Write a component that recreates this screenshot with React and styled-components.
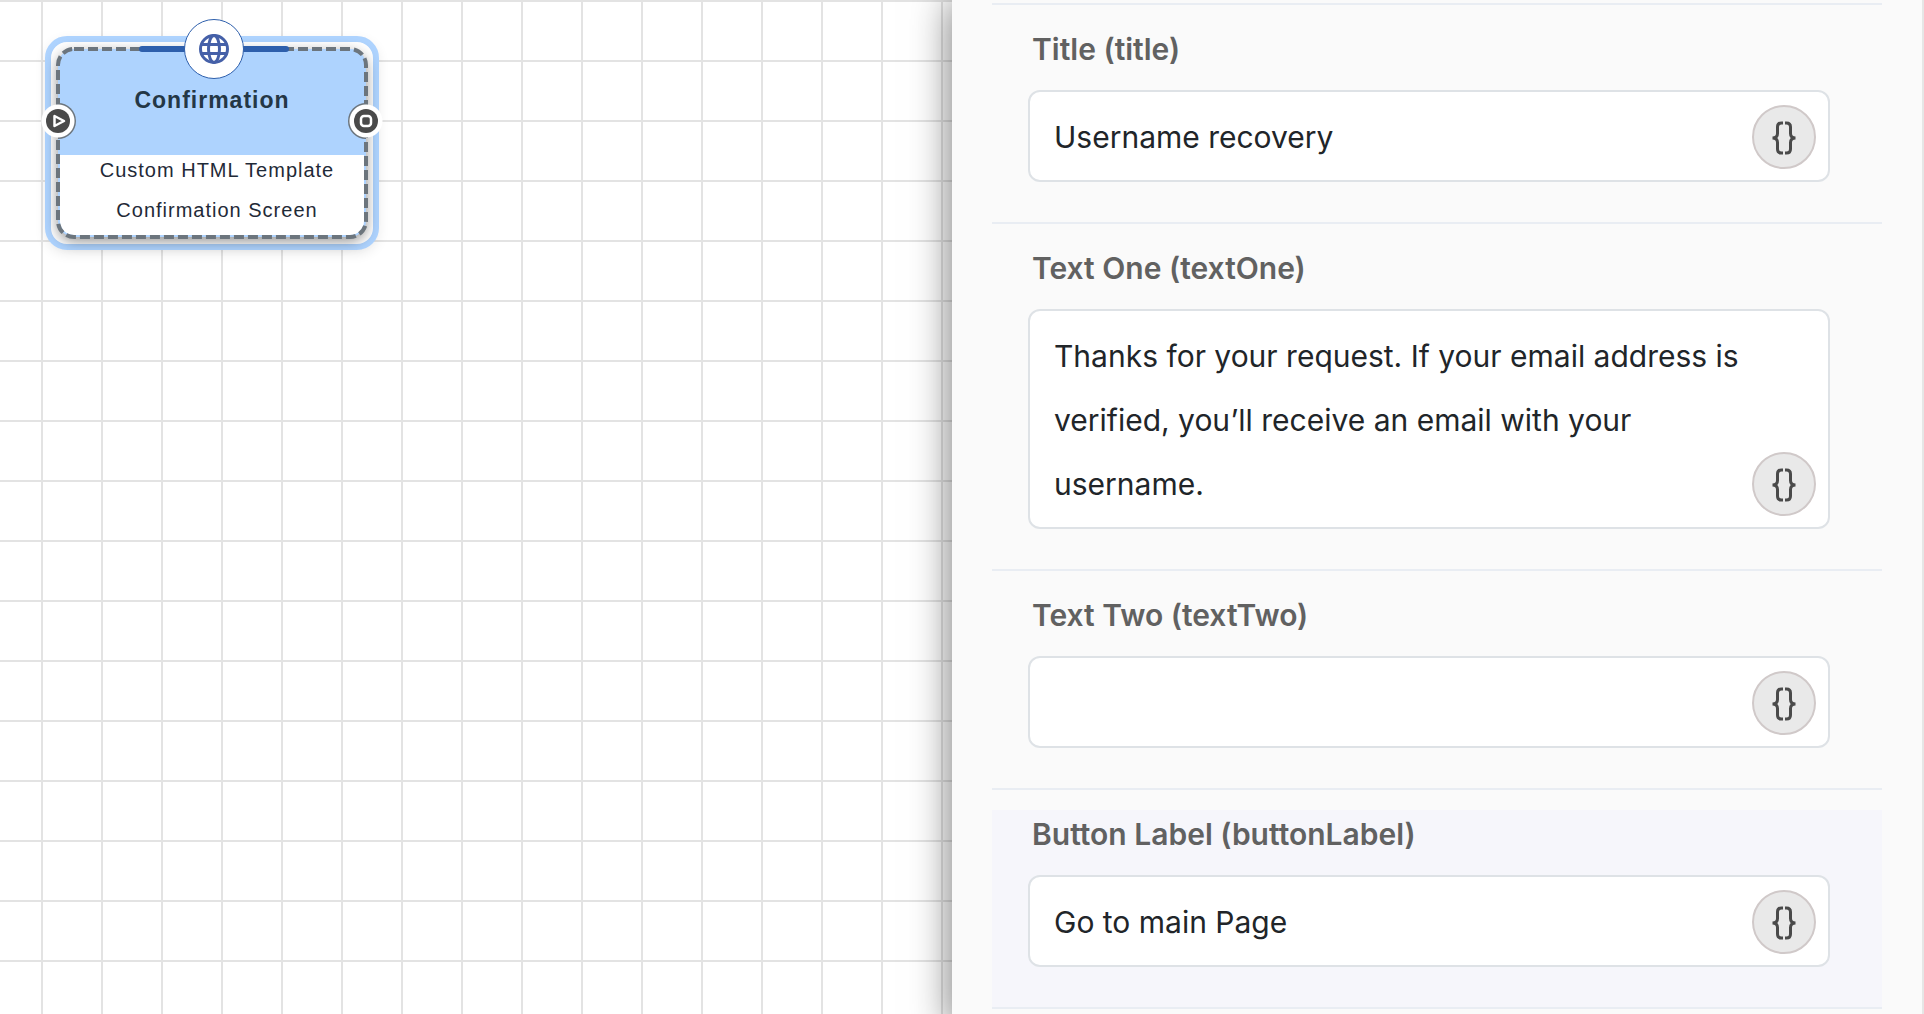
import React, { useId } from 'react';
import styled, { createGlobalStyle } from 'styled-components';

const GlobalStyle = createGlobalStyle`
  *, *::before, *::after { box-sizing: border-box; }
  body { margin: 0; background: #fff; }
`;

const uiFont = 'Inter, "Liberation Sans", sans-serif';
const nodeFont = '"Liberation Sans", Arial, sans-serif';

const Page = styled.div`
  display: grid;
  grid-template-columns: minmax(0, 952fr) minmax(0, 972fr);
  height: 100vh;
  overflow: hidden;
`;

const Canvas = styled.main`
  position: relative;
  overflow: hidden;
  background-color: #fff;
  background-image:
    linear-gradient(to right, #e3e3e3 2px, transparent 2px),
    linear-gradient(to bottom, #e3e3e3 2px, transparent 2px);
  background-size: 60px 60px;
  background-position: 41px 0, 0 0;
`;

const NodeFrame = styled.article`
  position: absolute;
  top: 36px;
  left: 45px;
  width: 334px;
  padding: 7px;
  border: 6px solid #aed3fe;
  border-radius: 22px;
  background: #fff;
  font-family: ${nodeFont};
  letter-spacing: 1px;
  text-align: center;
  box-shadow: 0 4px 12px rgba(0, 0, 0, 0.08);
`;

const NodeCard = styled.div`
  padding: 2px;
  border-radius: 16px;
  background: #aed3fe;
  box-shadow: 0 4px 14px rgba(0, 0, 0, 0.45);
`;

const NodeHeader = styled.header`
  height: 104px;
  padding-top: 32px;
`;

const NodeTitle = styled.h2`
  margin: 0;
  font-size: 23px;
  line-height: 34px;
  color: #243746;
`;

const NodeBody = styled.div`
  height: 80px;
  padding-left: 10px;
  border-radius: 0 0 14px 14px;
  background: #fff;
`;

const NodeLine = styled.p`
  margin: 0;
  font-size: 20px;
  line-height: 30px;
  padding-bottom: 10px;
  color: #1f2a37;
`;

const Outline = styled.svg`
  position: absolute;
  inset: 5px;
  width: 312px;
  height: 192px;
`;

const TopBar = styled.span`
  position: absolute;
  top: 4px;
  left: 88px;
  width: 150px;
  height: 6px;
  border-radius: 3px;
  background: #2e5fac;
`;

const TypeBadge = styled.span`
  position: absolute;
  top: -23px;
  left: 133px;
  display: grid;
  place-items: center;
  width: 60px;
  height: 60px;
  border: 1px solid #2e5fac;
  border-radius: 50%;
  background: #fff;
`;

const Port = styled.button`
  position: absolute;
  top: 61px;
  ${(p) => p.$side}: -11px;
  display: grid;
  place-items: center;
  width: 36px;
  height: 36px;
  padding: 0;
  border: 0;
  border-radius: 50%;
  background:
    radial-gradient(circle, #fff 16px, transparent 17px),
    linear-gradient(to ${(p) => p.$side}, #6c757d 50%, transparent 50%);
`;

const Panel = styled.aside`
  position: relative;
  min-width: 0;
  padding: 3px 40px 0;
  border-right: 2px solid #e6e6e6;
  background: #fafafa;
  box-shadow: 0 0 38px rgba(0, 0, 0, 0.55);
  font-family: ${uiFont};
`;

const Divider = styled.hr`
  height: 2px;
  margin: 0 0 20px;
  border: 0;
  background: #e9edf3;
`;

const FieldRow = styled.section`
  display: flex;
  flex-direction: column;
  padding: 0 52px 40px 36px;
  background: ${(p) => (p.$active ? '#f6f6fb' : 'transparent')};
`;

const FieldLabel = styled.label`
  padding: 4px 4px 21px;
  font-size: 30px;
  line-height: 40px;
  font-weight: 600;
  color: #616161;
`;

const FieldBox = styled.div`
  display: flex;
  align-items: flex-end;
  padding: 13px 12px 11px 24px;
  border: 2px solid #dee2e6;
  border-radius: 12px;
  background: #fff;
`;

const controlStyles = `
  flex: 1;
  min-width: 0;
  padding: 0;
  border: 0;
  outline: 0;
  background: transparent;
  font-family: ${uiFont};
  font-size: 30px;
  line-height: 64px;
  color: #212529;
`;

const TextInput = styled.input`
  ${controlStyles}
  height: 64px;
`;

const TextArea = styled.textarea`
  ${controlStyles}
  display: block;
  resize: none;
  overflow: hidden;
`;

const VariableButton = styled.button`
  display: grid;
  place-items: center;
  flex: none;
  width: 64px;
  height: 64px;
  padding: 2px 0 0;
  border: 2px solid #d0c9c9;
  border-radius: 50%;
  background: #e9e9e9;
  color: #4a4a4a;
`;

const BracesIcon = () => (
  <svg width="24" height="34" viewBox="0 0 24 34" fill="none" stroke="currentColor" strokeWidth="3" aria-hidden="true">
    <path d="M11 2H9.5C6.5 2 5.5 3.5 5.5 6V12.500C5.500 15.500 4 17 0.500 17C4 17 5.500 18.500 5.500 21.500V28C5.500 30.500 6.500 32 9.500 32H11" />
    <path d="M13 2H14.500C17.500 2 18.500 3.500 18.500 6V12.500C18.500 15.500 20 17 23.500 17C20 17 18.500 18.500 18.500 21.500V28C18.500 30.500 17.500 32 14.500 32H13" />
  </svg>
);

const GlobeIcon = () => (
  <svg width="30" height="30" viewBox="0 0 30 30" fill="none" stroke="#4560a8" strokeWidth="3" aria-hidden="true">
    <circle cx="15" cy="15" r="13.500" />
    <ellipse cx="15" cy="15" rx="5.500" ry="13.500" />
    <path d="M3 10.500H27M3 19.500H27" />
  </svg>
);

const PlayIcon = () => (
  <svg width="24" height="24" viewBox="0 0 24 24" aria-hidden="true">
    <circle cx="12" cy="12" r="12" fill="#4a4a4a" />
    <path d="M8.500 7V17L18 12Z" fill="none" stroke="#fff" strokeWidth="2.500" strokeLinejoin="round" />
  </svg>
);

const StopIcon = () => (
  <svg width="24" height="24" viewBox="0 0 24 24" aria-hidden="true">
    <circle cx="12" cy="12" r="12" fill="#4a4a4a" />
    <rect x="7" y="7" width="10" height="10" rx="3" fill="none" stroke="#fff" strokeWidth="2.500" />
  </svg>
);

const DashedOutline = () => (
  <Outline viewBox="0 0 312 192" fill="none" aria-hidden="true">
    <rect x="2" y="2" width="308" height="188" rx="16" stroke="#6c757d" strokeWidth="4" strokeDasharray="10 4" />
  </Outline>
);

const fields = [
  { label: 'Title (title)', value: 'Username recovery' },
  {
    label: 'Text One (textOne)',
    value: 'Thanks for your request. If your email address is verified, you’ll receive an email with your username.',
    rows: 3,
  },
  { label: 'Text Two (textTwo)', value: '' },
  { label: 'Button Label (buttonLabel)', value: 'Go to main Page', active: true },
];

function Field({ label, value, rows, active }) {
  const id = useId();
  return (
    <FieldRow $active={active}>
      <FieldLabel htmlFor={id}>{label}</FieldLabel>
      <FieldBox>
        {rows ? <TextArea id={id} rows={rows} defaultValue={value} /> : <TextInput id={id} type="text" defaultValue={value} />}
        <VariableButton type="button" aria-label={`Insert variable into ${label}`}>
          <BracesIcon />
        </VariableButton>
      </FieldBox>
    </FieldRow>
  );
}

export default function App() {
  return (
    <>
      <GlobalStyle />
      <Page>
        <Canvas>
          <NodeFrame>
            <NodeCard>
              <NodeHeader>
                <NodeTitle>Confirmation</NodeTitle>
              </NodeHeader>
              <NodeBody>
                <NodeLine>Custom HTML Template</NodeLine>
                <NodeLine>Confirmation Screen</NodeLine>
              </NodeBody>
            </NodeCard>
            <DashedOutline />
            <TopBar />
            <TypeBadge>
              <GlobeIcon />
            </TypeBadge>
            <Port type="button" aria-label="Input" $side="left">
              <PlayIcon />
            </Port>
            <Port type="button" aria-label="Output" $side="right">
              <StopIcon />
            </Port>
          </NodeFrame>
        </Canvas>
        <Panel>
          <Divider />
          {fields.map((field) => (
            <React.Fragment key={field.label}>
              <Field {...field} />
              <Divider />
            </React.Fragment>
          ))}
        </Panel>
      </Page>
    </>
  );
}
